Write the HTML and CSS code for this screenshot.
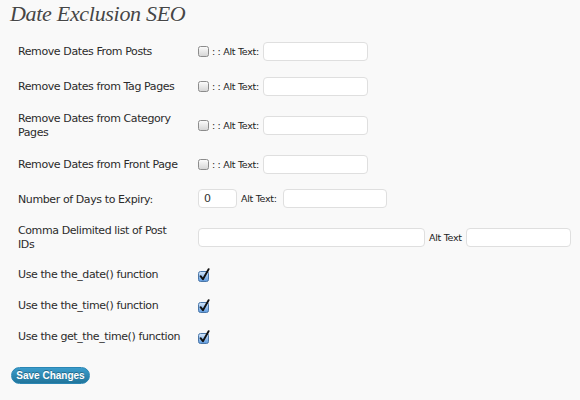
FILE: index.html
```html
<!DOCTYPE html>
<html>
<head>
<meta charset="utf-8">
<link rel="stylesheet" href="styles.css">
</head>
<body>
<div class="wrap">
  <h2 class="title">Date Exclusion SEO</h2>
  <form class="options">
    <table class="form-table">
      <colgroup><col class="c-label"><col class="c-field"></colgroup>
      <tr>
        <th>Remove Dates From Posts</th>
        <td><div class="field">
          <svg class="cb" width="11" height="11" viewBox="0 0 11 11"><defs><linearGradient id="g1" x1="0" y1="0" x2="0" y2="1"><stop offset="0" stop-color="#fdfdfd"/><stop offset="1" stop-color="#d4d4d4"/></linearGradient></defs><rect x="0.5" y="0.5" width="10" height="10" rx="2" fill="url(#g1)" stroke="#8c8c8c"/></svg>
          <span class="alt">: : Alt Text:</span>
          <input class="txt w-alt" type="text">
        </div></td>
      </tr>
      <tr>
        <th>Remove Dates from Tag Pages</th>
        <td><div class="field">
          <svg class="cb" width="11" height="11" viewBox="0 0 11 11"><rect x="0.5" y="0.5" width="10" height="10" rx="2" fill="url(#g1)" stroke="#8c8c8c"/></svg>
          <span class="alt">: : Alt Text:</span>
          <input class="txt w-alt" type="text">
        </div></td>
      </tr>
      <tr>
        <th>Remove Dates from Category Pages</th>
        <td><div class="field">
          <svg class="cb" width="11" height="11" viewBox="0 0 11 11"><rect x="0.5" y="0.5" width="10" height="10" rx="2" fill="url(#g1)" stroke="#8c8c8c"/></svg>
          <span class="alt">: : Alt Text:</span>
          <input class="txt w-alt" type="text">
        </div></td>
      </tr>
      <tr>
        <th>Remove Dates from Front Page</th>
        <td><div class="field">
          <svg class="cb" width="11" height="11" viewBox="0 0 11 11"><rect x="0.5" y="0.5" width="10" height="10" rx="2" fill="url(#g1)" stroke="#8c8c8c"/></svg>
          <span class="alt">: : Alt Text:</span>
          <input class="txt w-alt" type="text">
        </div></td>
      </tr>
      <tr class="tight">
        <th>Number of Days to Expiry:</th>
        <td><div class="field">
          <input class="txt w-num" type="text" value="0">
          <span class="alt gap">Alt Text:</span>
          <input class="txt w-alt2" type="text">
        </div></td>
      </tr>
      <tr>
        <th>Comma Delimited list of Post IDs</th>
        <td><div class="field">
          <input class="txt w-ids" type="text">
          <span class="alt">Alt Text</span>
          <input class="txt w-alt" type="text">
        </div></td>
      </tr>
      <tr>
        <th>Use the the_date() function</th>
        <td class="chk"><svg class="cbc" width="13" height="14" viewBox="0 0 13 14"><defs><linearGradient id="g2" x1="0" y1="0" x2="0" y2="1"><stop offset="0" stop-color="#d6e8fb"/><stop offset="1" stop-color="#5d9ade"/></linearGradient></defs><rect x="0.5" y="3.5" width="10" height="10" rx="2" fill="url(#g2)" stroke="#4b77a8"/><path d="M2.6 8.2 L4.9 11.2 L10.6 1.2" fill="none" stroke="#111" stroke-width="1.9" stroke-linecap="round" stroke-linejoin="round"/></svg></td>
      </tr>
      <tr>
        <th>Use the the_time() function</th>
        <td class="chk"><svg class="cbc" width="13" height="14" viewBox="0 0 13 14"><rect x="0.5" y="3.5" width="10" height="10" rx="2" fill="url(#g2)" stroke="#4b77a8"/><path d="M2.6 8.2 L4.9 11.2 L10.6 1.2" fill="none" stroke="#111" stroke-width="1.9" stroke-linecap="round" stroke-linejoin="round"/></svg></td>
      </tr>
      <tr>
        <th>Use the get_the_time() function</th>
        <td class="chk"><svg class="cbc" width="13" height="14" viewBox="0 0 13 14"><rect x="0.5" y="3.5" width="10" height="10" rx="2" fill="url(#g2)" stroke="#4b77a8"/><path d="M2.6 8.2 L4.9 11.2 L10.6 1.2" fill="none" stroke="#111" stroke-width="1.9" stroke-linecap="round" stroke-linejoin="round"/></svg></td>
      </tr>
    </table>
    <div class="submit">
      <button type="button" class="btn">Save Changes</button>
    </div>
  </form>
</div>
</body>
</html>
```

FILE: styles.css
```css
html, body {
  margin: 0;
  padding: 0;
  background: #f9f9f9;
}
body {
  width: 580px;
  height: 400px;
  overflow: hidden;
  font-family: "DejaVu Sans", "Liberation Sans", sans-serif;
  color: #333;
}
.wrap {
  padding: 0 0 0 10px;
}
.title {
  margin: 0;
  padding: 1px 0 0 0;
  height: 30px;
  font-family: "Liberation Serif", "DejaVu Serif", serif;
  font-style: italic;
  font-weight: normal;
  font-size: 22px;
  letter-spacing: -0.3px;
  line-height: 26px;
  color: #464646;
  text-shadow: 0 1px 0 #fff;
}
.form-table {
  border-collapse: collapse;
  table-layout: fixed;
  width: 570px;
  margin: 3px 0 0 -2px;
}
.c-label { width: 185px; }
.form-table th {
  padding: 8px 10px 7px;
  text-align: left;
  font-weight: normal;
  font-size: 11px;
  letter-spacing: -0.4px;
  line-height: 14px;
  vertical-align: middle;
  color: #2b2b2b;
}
.form-table td {
  padding: 8px 0 8px 5px;
  vertical-align: middle;
}
.form-table tr.tight td {
  padding-top: 7px;
  padding-bottom: 8px;
}
.form-table td.chk {
  padding-top: 9px;
  padding-bottom: 8px;
}
.field {
  display: flex;
  align-items: center;
  height: 19px;
}
.cb {
  display: block;
  flex: none;
  margin-right: 3px;
}
.cbc {
  display: block;
}
.alt {
  font-size: 9.5px;
  letter-spacing: -0.3px;
  color: #222;
  margin-right: 4px;
  white-space: nowrap;
}
.alt.gap {
  margin-left: 4px;
  margin-right: 6px;
}
.txt {
  box-sizing: border-box;
  height: 19px;
  border: 1px solid #dfdfdf;
  border-radius: 4px;
  background: #fff;
  padding: 0 5px;
  margin: 0;
  font-family: "DejaVu Sans", sans-serif;
  font-size: 11px;
  color: #333;
  outline: none;
  flex: none;
}
.w-alt { width: 105px; }
.w-num { width: 39px; }
.w-alt2 { width: 104px; }
.w-ids { width: 227px; margin-right: 4px; }
.submit {
  padding: 12px 0 0 1px;
}
.btn {
  box-sizing: border-box;
  height: 17px;
  width: 79px;
  padding: 0;
  border: 1px solid #2a86b4;
  border-radius: 9px;
  background: linear-gradient(#3b9ccb, #21759b);
  color: #fff;
  font-family: "Liberation Sans", "DejaVu Sans", sans-serif;
  font-weight: bold;
  font-size: 10px;
  line-height: 15px;
  white-space: nowrap;
  text-align: center;
  text-shadow: 0 -1px 0 rgba(0,0,0,0.3);
}
```
